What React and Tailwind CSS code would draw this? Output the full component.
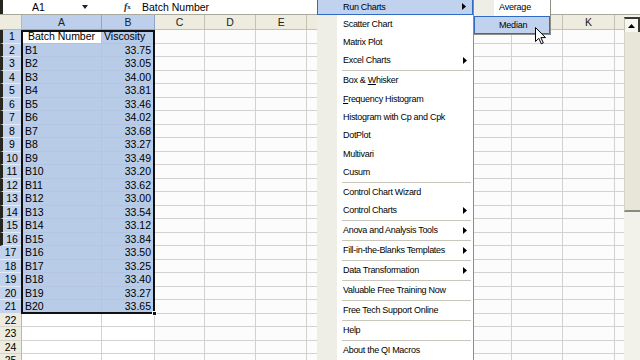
import React from "react";

const values = [
  "33.75","33.05","34.00","33.81","33.46","34.02","33.68","33.27","33.49","33.20",
  "33.62","33.00","33.54","33.12","33.84","33.50","33.25","33.40","33.27","33.65",
];

const otherCols = [
  { k: "C", w: "w-[50px]", show: true },
  { k: "D", w: "w-[51.2px]", show: true },
  { k: "E", w: "w-[51.2px]", show: true },
  { k: "F", w: "w-[51.2px]" },
  { k: "G", w: "w-[51.2px]" },
  { k: "H", w: "w-[51.2px]" },
  { k: "I", w: "w-[51.2px]" },
  { k: "J", w: "w-[51.2px]" },
  { k: "K", w: "w-[51.2px]", show: true },
  { k: "L", w: "w-[51.2px]" },
];

const menu = [
  { t: "Run Charts", arrow: true, hl: true },
  { t: "Scatter Chart" },
  { t: "Matrix Plot" },
  { t: "Excel Charts", arrow: true },
  { sep: true },
  { t: "Box & Whisker", u: 6 },
  { t: "Frequency Histogram", u: 0 },
  { t: "Histogram with Cp and Cpk" },
  { t: "DotPlot" },
  { t: "Multivari" },
  { t: "Cusum" },
  { sep: true },
  { t: "Control Chart Wizard" },
  { t: "Control Charts", arrow: true },
  { sep: true },
  { t: "Anova and Analysis Tools", arrow: true },
  { sep: true },
  { t: "Fill-in-the-Blanks Templates", arrow: true },
  { sep: true },
  { t: "Data Transformation", arrow: true },
  { sep: true },
  { t: "Valuable Free Training Now" },
  { sep: true },
  { t: "Free Tech Support Online" },
  { sep: true },
  { t: "Help" },
  { sep: true },
  { t: "About the QI Macros" },
];

function Label({ t, u }) {
  if (u === undefined) return <>{t}</>;
  return (
    <>
      {t.slice(0, u)}
      <span className="underline">{t[u]}</span>
      {t.slice(u + 1)}
    </>
  );
}

function Arrow() {
  return (
    <svg width="4" height="7" viewBox="0 0 4 7" className="mr-[6px] ml-auto">
      <path d="M0 0 L4 3.5 L0 7 Z" fill="#000" />
    </svg>
  );
}

function Menu() {
  return (
    <div className="absolute left-[317px] top-[-3.15px] w-[157px] bg-white border-r border-b border-[#8e8d86] font-['Liberation_Sans',sans-serif] text-[9px] tracking-[-0.3px] text-black leading-none">
      {menu.map((m, i) =>
        m.sep ? (
          <div key={i} className="flex h-[1.7px]">
            <div className="w-[20px] bg-[#efeee6]" />
            <div className="flex-1 flex items-center pl-[5px] pr-[2px]">
              <div className="h-px w-full bg-[#c9c7bc]" />
            </div>
          </div>
        ) : m.hl ? (
          <div key={i} className="flex h-[18.3px] items-center bg-[#c1d2ee] border border-[#316ac5]">
            <div className="w-[19px]" />
            <span className="pl-[6px] pt-[2px]">{m.t}</span>
            <Arrow />
          </div>
        ) : (
          <div key={i} className="flex h-[18.3px] items-center">
            <div className="w-[20px] self-stretch bg-[#efeee6]" />
            <span className="pl-[6px]">
              <Label t={m.t} u={m.u} />
            </span>
            {m.arrow && <Arrow />}
          </div>
        )
      )}
    </div>
  );
}

function SubMenu() {
  return (
    <div className="absolute left-[474px] top-[-2px] w-[77px] bg-white border-r border-b border-[#8e8d86] font-['Liberation_Sans',sans-serif] text-[9px] tracking-[-0.2px] text-black leading-none">
      <div className="flex h-[18px] items-center">
        <div className="w-[20px] self-stretch bg-[#efeee6]" />
        <span className="pl-[5px]">Average</span>
      </div>
      <div className="flex h-[18px] items-center bg-[#c1d2ee] border border-[#316ac5]">
        <div className="w-[19px]" />
        <span className="pl-[5px]">Median</span>
      </div>
    </div>
  );
}

function Cursor() {
  return (
    <svg className="absolute left-[535px] top-[27px]" width="12" height="18" viewBox="0 0 12 18">
      <path
        d="M0.5 0.5 L0.5 14.5 L3.8 11.3 L6.3 16.8 L8.3 15.9 L5.9 10.6 L10.5 10.6 Z"
        fill="#fff"
        stroke="#000"
        strokeWidth="1"
        strokeLinejoin="round"
      />
    </svg>
  );
}

function HeaderRow() {
  return (
    <div className="flex h-[15px] shrink-0 text-[10.5px] leading-none text-[#222]">
      <div className="w-[22px] shrink-0 bg-[#edecdf] border-r border-b border-[#b9b7a8]" />
      <div className="w-[80px] shrink-0 flex items-center justify-center bg-[#bdcfeb] border-r border-b border-[#8fa6cc]">A</div>
      <div className="w-[53px] shrink-0 flex items-center justify-center bg-[#bdcfeb] border-r border-b border-[#8fa6cc]">B</div>
      {otherCols.map((c) => (
        <div
          key={c.k}
          className={`${c.w} shrink-0 flex items-center justify-center bg-[#edecdf] border-r border-b border-[#c3c1b2]`}
        >
          {c.show ? c.k : null}
        </div>
      ))}
    </div>
  );
}

function Row({ n }) {
  const sel = n <= 21;
  const dark = n <= 16;
  return (
    <div className="flex h-[13.5px] shrink-0 text-[10.5px] leading-none text-black">
      <div
        className={`w-[22px] shrink-0 flex items-center justify-center border-b border-r ${
          sel ? "bg-[#c3d3ec] border-b-[#e2eaf6] border-r-[#8fa6cc]" : "bg-[#edecdf] border-b-[#d6d4c6] border-r-[#b9b7a8]"
        } ${dark ? "border-l-[3px] border-l-[#26261e]" : ""}`}
      >
        {n}
      </div>
      {n === 1 ? (
        <>
          <div className="w-[80px] shrink-0 flex items-center justify-center bg-white border-r border-b border-[#b0c3e0]">
            Batch Number
          </div>
          <div className="w-[53px] shrink-0 flex items-center pl-[2px] bg-[#b8cbe7] border-r border-b border-[#b0c3e0]">
            Viscosity
          </div>
        </>
      ) : sel ? (
        <>
          <div className="w-[80px] shrink-0 flex items-center pl-[3px] bg-[#b8cbe7] border-r border-b border-[#b3c5e1]">
            B{n - 1}
          </div>
          <div className="w-[53px] shrink-0 flex items-center justify-end pr-[3px] bg-[#b8cbe7] border-r border-b border-[#b3c5e1]">
            {values[n - 2]}
          </div>
        </>
      ) : (
        <>
          <div className="w-[80px] shrink-0 bg-white border-r border-b border-[#d2d2d2]" />
          <div className="w-[53px] shrink-0 bg-white border-r border-b border-[#d2d2d2]" />
        </>
      )}
      {otherCols.map((c) => (
        <div key={c.k} className={`${c.w} shrink-0 bg-[#fcfcfc] border-r border-b border-[#d2d2d2]`} />
      ))}
    </div>
  );
}

function FormulaBar() {
  return (
    <div className="flex h-[15px] shrink-0 bg-white border-b border-[#a9a89c] text-[10.5px] leading-none text-black">
      <div className="w-[3px] bg-[#26261e]" />
      <div className="relative w-[88px] flex items-center pl-[29px]">
        A1
        <svg className="absolute left-[79px] top-[5px]" width="6" height="4" viewBox="0 0 6 4">
          <path d="M0 0 L6 0 L3 4 Z" fill="#222" />
        </svg>
      </div>
      <div className="w-[33px]" />
      <div className="w-[16px] flex items-center font-['Liberation_Serif',serif] italic font-bold text-[10px] text-[#333]">
        f<span className="text-[7px] not-italic">x</span>
      </div>
      <div className="flex items-center pl-[2px]">Batch Number</div>
    </div>
  );
}

function ScrollBar() {
  return (
    <div className="w-[16px] shrink-0 flex flex-col bg-[#f3f2ea]">
      <div className="h-[2px]" />
      <div className="h-[15px] flex items-center justify-center bg-[#f7f6f0] border-t-2 border-r-2 border-[#3a3a34] border-l border-l-[#c5c3b5]">
        <svg width="7" height="4" viewBox="0 0 7 4">
          <path d="M0 4 L3.5 0 L7 4 Z" fill="#000" />
        </svg>
      </div>
      <div className="h-[180px] bg-[#e8e6d9] border-l border-[#d6d4c6] border-b-2 border-b-[#8d8b7e]" />
      <div className="flex-1" />
    </div>
  );
}

export default function App() {
  const rows = Array.from({ length: 25 }, (_, i) => i + 1);
  return (
    <div className="relative w-[640px] h-[360px] overflow-hidden bg-white font-['Liberation_Sans',sans-serif]">
      <FormulaBar />
      <div className="flex h-[345px]">
        <div className="relative w-[624px] shrink-0 overflow-hidden flex flex-col">
          <HeaderRow />
          {rows.map((n) => (
            <Row key={n} n={n} />
          ))}
          <div className="absolute left-[21px] top-[15px] w-[134px] h-[284px] border-2 border-[#101010] pointer-events-none" />
          <div className="absolute left-[152px] top-[296px] w-[5px] h-[5px] bg-[#101010] border border-white pointer-events-none" />
        </div>
        <ScrollBar />
      </div>
      <Menu />
      <SubMenu />
      <Cursor />
    </div>
  );
}
